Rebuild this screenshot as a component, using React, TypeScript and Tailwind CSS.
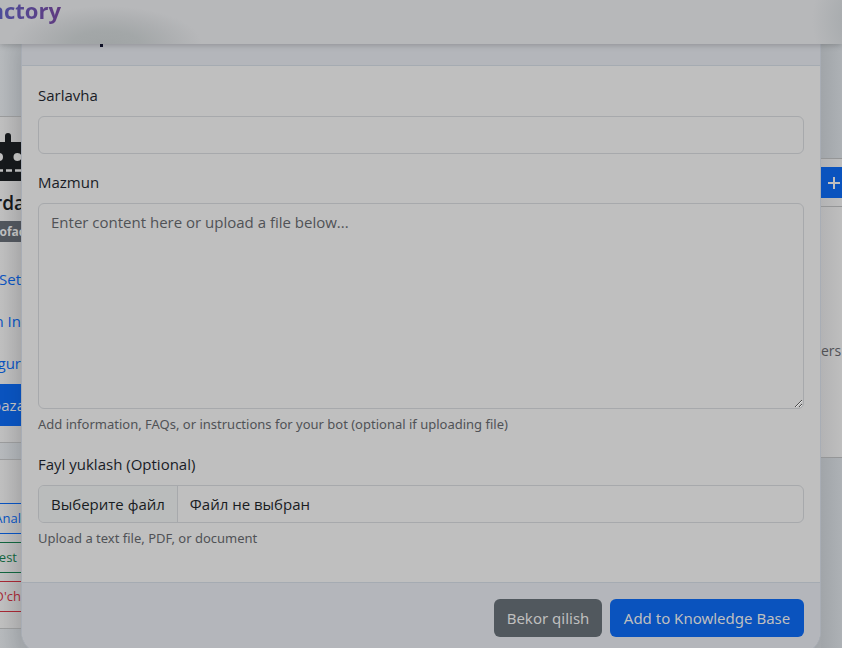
import React from "react";

const controlBorder = "border border-[#a7a9ac]";

function Navbar() {
  return (
    <header className="relative z-10 h-11 shrink-0 bg-[#b7b8ba] shadow-[0_1px_6px_rgba(0,0,0,0.22)]">
      <div className="flex h-full items-start overflow-hidden bg-[radial-gradient(ellipse_96px_38px_at_106px_44px,#a0a4a5_0%,#a3a7a8_35%,#adafb1_68%,transparent_100%),radial-gradient(ellipse_50px_60px_at_862px_20px,#a0a5a8_0%,transparent_100%)]">
        <a href="#" className="flex w-[61px] justify-end whitespace-nowrap bg-gradient-to-r from-[#4d4d9a] to-[#5f3a80] bg-clip-text pb-2 text-[22px] leading-5 font-bold text-transparent">
          actory
        </a>
      </div>
    </header>
  );
}

function Robot() {
  return (
    <svg className="block h-12 w-[21px]" viewBox="0 0 21 48" aria-hidden="true">
      <path d="M5 3a3 3 0 0 1 6 0v6h10v39H0V9h5z" fill="#16191c" />
      <circle cx="-1" cy="24" r="4" fill="#bfbfbf" />
      <circle cx="17.500" cy="24" r="4" fill="#bfbfbf" />
      <path d="M0 37.500h3M6 37.500h6M15 37.500h6" stroke="#bfbfbf" strokeWidth="2.500" />
    </svg>
  );
}

function NavItem({ text, active = false }: { text: string; active?: boolean }) {
  return (
    <a
      href="#"
      className={
        "flex h-[42px] items-center justify-end whitespace-nowrap text-[15px] " +
        (active ? "-mr-1 bg-[#0a53be] text-[#bfbfbf]" : "text-[#0a53be]")
      }
    >
      {text}
    </a>
  );
}

function Sidebar() {
  return (
    <aside className="w-[21px] shrink-0 overflow-hidden bg-gradient-to-r from-[#b6b9bc] to-[#a9adb1] pt-[72px]">
      <div className="h-[327px] border-y border-[#9a9b9c] bg-gradient-to-r from-[#bfbfbf] to-[#b2b2b3] pt-4">
        <Robot />
        <h5 className="-mr-1 mt-2 flex h-7 items-center justify-end whitespace-nowrap text-[19px] font-semibold text-[#16191c]">rda</h5>
        <div className="mt-1 mb-4 -mr-1 flex h-[21px] items-center justify-end bg-[#51565d] text-[12px] font-bold text-[#bfbfbf]">ofac</div>
        <nav>
          <NavItem text="Set" />
          <NavItem text="n In" />
          <NavItem text="gur" />
          <NavItem text="baza" active />
        </nav>
      </div>
      <div className="mt-4 flex h-[170px] flex-col gap-2 border-y border-[#9a9b9c] bg-gradient-to-r from-[#bfbfbf] to-[#b2b2b3] pt-[43px]">
        <button className="flex h-[31px] items-center justify-end border-y border-[#0a53be] text-[13px] text-[#0a53be]">Anal</button>
        <button className="flex h-[31px] items-center justify-end border-y border-[#13653f] pr-1 text-[13px] text-[#13653f]">Test</button>
        <button className="flex h-[31px] items-center justify-end border-y border-[#a52834] text-[13px] text-[#a52834]">O'ch</button>
      </div>
    </aside>
  );
}

function Content() {
  return (
    <section className="w-[21px] shrink-0 overflow-hidden bg-gradient-to-r from-[#a1a5a9] to-[#adb1b5] pt-[114px]">
      <div className="h-[300px] border-y border-[#959697] bg-gradient-to-r from-[#b3b3b4] to-[#bebebe]">
        <div className="h-12 border-b border-[#959697] pt-2">
          <button aria-label="Add" className="flex h-[31px] w-full items-center justify-center bg-[#0a53be] pl-[5px]">
            <svg className="h-3 w-3" viewBox="0 0 12 12" aria-hidden="true">
              <path d="M6 0v12M0 6h12" stroke="#bfbfbf" strokeWidth="2" />
            </svg>
          </button>
        </div>
        <p className="mt-[132px] text-[14px] leading-6 text-[#505256]">ers</p>
      </div>
    </section>
  );
}

function HelpText({ children }: { children: React.ReactNode }) {
  return (
    <p className="mt-1 mb-[15px] font-['Noto_Sans',sans-serif] text-[13px] leading-[23px] text-[#505256]">{children}</p>
  );
}

function KnowledgeModal() {
  return (
    <form className="flex min-w-0 flex-1 flex-col self-start rounded-b-[22px] border-x border-b border-[#a8adb5] bg-[#bfbfbf] shadow-[0_4px_20px_rgba(0,0,0,0.1)]">
      <div className="h-[22px] border-b border-[#a5abb2] bg-[#b4b6bb]">
        <div className="ml-[78px] h-[3px] w-[3px] bg-[#10122a]" />
      </div>
      <div className="px-4 pt-4 pb-[17px]">
        <label htmlFor="title" className="mb-2 block text-[15px] leading-[26px]">Sarlavha</label>
        <input id="title" type="text" className={`mb-[15px] block h-[38px] w-full rounded-md bg-transparent px-3 ${controlBorder}`} />
        <label htmlFor="content" className="mb-2 block text-[15px] leading-[26px]">Mazmun</label>
        <textarea
          id="content"
          placeholder="Enter content here or upload a file below..."
          className={`block h-[206px] w-full resize-y rounded-md bg-transparent px-3 py-1.5 text-[15px] leading-6 placeholder:text-[#505256] ${controlBorder}`}
        />
        <HelpText>Add information, FAQs, or instructions for your bot (optional if uploading file)</HelpText>
        <label htmlFor="file" className="mb-2 block text-[15px] leading-[26px]">Fayl yuklash (Optional)</label>
        <label htmlFor="file" className={`relative flex h-[38px] w-full items-stretch overflow-hidden rounded-md text-[15px] text-[#191c1f] ${controlBorder}`}>
          <input id="file" type="file" className="sr-only" />
          <span className="flex items-center border-r border-[#a7a9ac] bg-[#babcbc] px-3">Выберите файл</span>
          <span className="flex items-center px-3">Файл не выбран</span>
        </label>
        <HelpText>Upload a text file, PDF, or document</HelpText>
      </div>
      <div className="flex justify-end gap-2 rounded-b-[21px] border-t border-[#a5abb2] bg-[#b4b6bb] p-4 font-['Noto_Sans',sans-serif] text-[15px] text-[#bfbfbf]">
        <button type="button" className="h-[38px] w-[108px] rounded-md bg-[#51585e]">Bekor qilish</button>
        <button type="submit" className="h-[38px] w-[194px] rounded-md bg-[#0a53be]">Add to Knowledge Base</button>
      </div>
    </form>
  );
}

export default function App() {
  return (
    <div className="flex h-screen flex-col overflow-hidden bg-[#aaaeb2] font-['Open_Sans','Noto_Sans',sans-serif] text-[#191c26]">
      <Navbar />
      <main className="flex min-h-0 flex-1">
        <Sidebar />
        <KnowledgeModal />
        <Content />
      </main>
    </div>
  );
}
